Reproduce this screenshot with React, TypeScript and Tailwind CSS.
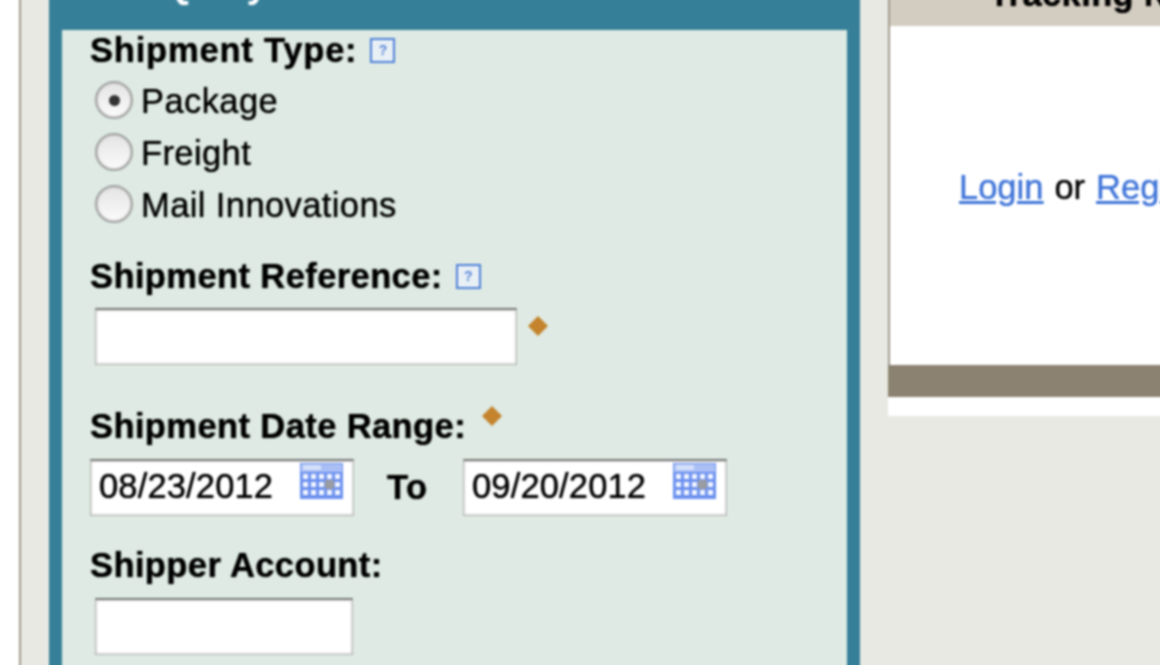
import React from "react";

const HelpIcon = () => (
  <span className="ml-[13px] inline-flex h-[25px] w-[25px] items-center justify-center border-2 border-[#4f7fd8] bg-[#e8f0f6] text-[14px] font-bold leading-none tracking-normal text-[#5b84d8] [text-shadow:none]">
    ?
  </span>
);

const Diamond = () => (
  <svg width="20" height="20" viewBox="0 0 20 20" className="shrink-0">
    <path d="M10 0 L20 10 L10 20 L0 10 Z" fill="#c4832c" />
  </svg>
);

const CalendarIcon = () => (
  <svg width="43" height="36" viewBox="0 0 43 36" className="mb-[14px] shrink-0">
    <rect x="0" y="0" width="43" height="36" fill="#6b90ee" />
    <rect x="1" y="1" width="41" height="8" fill="#a9bff5" />
    <rect x="3" y="2" width="18" height="5" fill="#d5e0fa" />
    {[11, 19, 27].map((y) =>
      [3, 11, 19, 27, 35].map((x) => (
        <rect key={`${x}-${y}`} x={x} y={y} width="5" height="5" fill="#f1f5ff" />
      ))
    )}
    <rect x="25" y="17" width="9" height="9" fill="#9a9ca3" />
  </svg>
);

const Radio = ({ checked }: { checked?: boolean }) => (
  <span className="flex h-[38px] w-[38px] shrink-0 items-center justify-center rounded-full border-2 border-[#a3a3a3] bg-gradient-to-b from-[#e4e4e4] to-[#fbfbfb] shadow-[inset_0_0_2px_#888]">
    {checked && <span className="h-[11px] w-[11px] rounded-full bg-[#333]" />}
  </span>
);

const TextBox = ({ className, children }: { className: string; children?: React.ReactNode }) => (
  <div className={`border border-[#b5b5b5] border-t-2 border-t-[#777] bg-white shadow-[inset_0_0_3px_#bbb] ${className}`}>
    {children}
  </div>
);

const DateBox = ({ value }: { value: string }) => (
  <TextBox className="flex h-[57px] w-[264px] items-center justify-between pl-[8px] pr-[10px]">
    <span className="mb-[4px] tracking-[0.15px]">{value}</span>
    <CalendarIcon />
  </TextBox>
);

export default function App() {
  const options = ["Package", "Freight", "Mail Innovations"];

  return (
    <div className="h-[665px] w-[1160px] overflow-hidden">
      {/* runs a little past the window so the soft edge stays out of view */}
      <div className="-mt-[4px] flex h-[685px] w-[1180px] bg-[#e8e9e3] font-['Liberation_Sans',Arial,sans-serif] text-[34.5px] leading-none tracking-[0.4px] text-black blur-[0.8px] [text-shadow:0_0_1px]">
        {/* left margin */}
        <div className="w-[19px] shrink-0 border-r-2 border-[#a09a8c] bg-white box-content" />

        {/* main form panel */}
        <div className="ml-[28px] flex h-full w-[811px] shrink-0 flex-col overflow-hidden border-x-[13px] border-[#367f99]">
          <div className="flex h-[34px] shrink-0 items-end overflow-hidden bg-[#367f99] pb-[27px] pl-[103px] font-bold whitespace-nowrap text-white">
            <span>Query Criteria</span>
          </div>
          <div className="flex-1 bg-[#deeae3] pl-[28px]">
            <div className="flex h-[40px] items-center font-bold tracking-[0.8px]">
              Shipment Type:
              <HelpIcon />
            </div>
            <div className="flex flex-col gap-[14px] pl-[5px] pt-[11px]">
              {options.map((label, i) => (
                <label key={label} className="flex h-[38px] items-center gap-[8px]">
                  <Radio checked={i === 0} />
                  <span className="pt-[2px]">{label}</span>
                </label>
              ))}
            </div>

            <div className="mt-[33px] flex h-[40px] items-center font-bold">
              Shipment Reference:
              <HelpIcon />
            </div>
            <div className="mt-[12px] flex items-start gap-[11px] pl-[5px]">
              <TextBox className="h-[57px] w-[422px]" />
              <div className="mt-[8px]">
                <Diamond />
              </div>
            </div>

            <div className="mt-[39px] flex h-[44px] items-center font-bold">
              Shipment Date Range:
              <div className="mb-[20px] ml-[16px]">
                <Diamond />
              </div>
            </div>
            <div className="mt-[11px] flex items-center">
              <DateBox value="08/23/2012" />
              <span className="mb-[1px] w-[109px] pl-[33px] font-bold">To</span>
              <DateBox value="09/20/2012" />
            </div>

            <div className="mt-[29px] flex h-[40px] items-center font-bold">Shipper Account:</div>
            <div className="mt-[13px] pl-[5px]">
              <TextBox className="h-[57px] w-[258px]" />
            </div>
          </div>
        </div>

        {/* tracking side panel */}
        <div className="ml-[28px] flex-1 overflow-hidden">
          <div className="flex h-[30px] items-end overflow-hidden border-l-[2px] border-[#a09a8c] bg-[#d3ccc0] pb-[15px] pl-[99px] font-bold whitespace-nowrap">
            <span>Tracking Numbers</span>
          </div>
          <div className="flex h-[339px] items-start whitespace-nowrap border-l-[2px] border-[#a09a8c] bg-white pl-[69px] pt-[144px] tracking-normal">
            <a href="#" className="text-[#3f74d8] underline">Login</a>
            <span className="mx-[11px]">or</span>
            <a href="#" className="text-[#3f74d8] underline">Register</a>
          </div>
          <div className="h-[32px] bg-[#8b8271]" />
          <div className="h-[19px] bg-white" />
        </div>
      </div>
    </div>
  );
}
